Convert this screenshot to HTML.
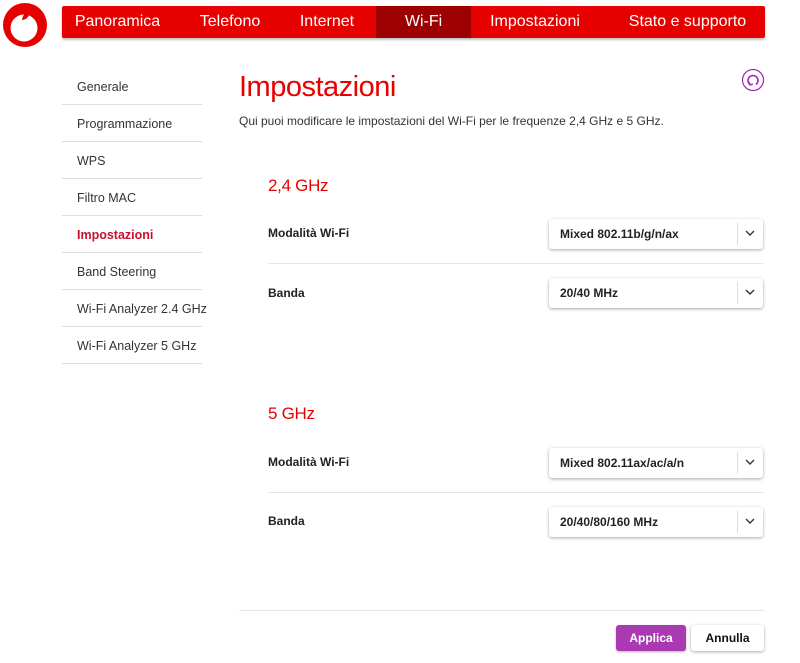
<!DOCTYPE html>
<html><head><meta charset="utf-8"><style>
*{margin:0;padding:0;box-sizing:border-box}
body{width:800px;height:663px;background:#fff;font-family:"Liberation Sans",Arial,sans-serif;position:relative;overflow:hidden;color:#333}
.abs{position:absolute}
.nav{left:62px;top:6px;width:703px;height:32px;background:#e60000;border-radius:2px;box-shadow:0 2px 2px rgba(0,0,0,.25)}
.nav span{position:absolute;top:0;height:32px;line-height:32px;color:#fff;font-size:16px;text-align:center;white-space:nowrap}
.side{left:62px;width:140px;font-size:12.5px;color:#333}
.side div{height:37px;line-height:39px;padding-left:15px;border-bottom:1px solid #ddd;white-space:nowrap}
.lbl{left:268px;font-size:12px;font-weight:bold;color:#222}
.sel{left:549px;width:214px;height:30px;border-radius:3px;box-shadow:0 1px 3px rgba(0,0,0,.35);background:#fff;font-size:12px;font-weight:bold;color:#222;line-height:30px;padding-left:11px}
.sel i{position:absolute;right:25px;top:4px;width:1px;height:22px;background:#ddd}
.sel svg{position:absolute;right:8px;top:11px}
.hr{height:1px;background:#e6e6e6}
.h2{left:268px;font-size:17px;color:#e60000;letter-spacing:-0.3px}
</style></head><body>
<svg class="abs" style="left:2px;top:2px" width="46" height="46" viewBox="0 0 46 46"><circle cx="23" cy="23" r="22" fill="#e60000"/><circle cx="22" cy="26" r="13.5" fill="#fff"/><path d="M33 7C27 7 21 11 20 18C23 18 26 16 27 13C28 11 30 10 33 10Z" fill="#e60000"/></svg>
<div class="abs nav">
<span style="left:0;width:111px">Panoramica</span>
<span style="left:125px;width:86px">Telefono</span>
<span style="left:225px;width:80px">Internet</span>
<span style="left:314px;width:95px;background:#9c0000">Wi-Fi</span>
<span style="left:418px;width:110px">Impostazioni</span>
<span style="left:548px;width:155px">Stato e supporto</span>
</div>
<div class="abs side" style="top:68px">
<div>Generale</div><div>Programmazione</div><div>WPS</div><div>Filtro MAC</div>
<div style="color:#c8102e;font-weight:bold">Impostazioni</div><div>Band Steering</div><div>Wi-Fi Analyzer 2.4 GHz</div><div>Wi-Fi Analyzer 5 GHz</div>
</div>
<div class="abs" style="left:239px;top:71px;font-size:29px;color:#e60000;letter-spacing:-0.5px">Impostazioni</div>
<div class="abs" style="left:239px;top:114px;font-size:12px;color:#333">Qui puoi modificare le impostazioni del Wi-Fi per le frequenze 2,4 GHz e 5 GHz.</div>
<svg class="abs" style="left:741px;top:68px" width="24" height="24" viewBox="0 0 24 24"><circle cx="12" cy="12" r="10.5" fill="none" stroke="#9c27b0" stroke-width="1.2"/><path d="M9 16.5A5 5 0 1 1 15 16.5" fill="none" stroke="#9c27b0" stroke-width="1.6"/><path d="M8 14l1 3 3-1" fill="none" stroke="#9c27b0" stroke-width="1.4"/></svg>
<div class="abs h2" style="top:176px">2,4 GHz</div>
<div class="abs lbl" style="top:226px">Modalità Wi-Fi</div>
<div class="abs sel" style="top:219px">Mixed 802.11b/g/n/ax<i></i><svg width="10" height="7"><path d="M1 1l4 4 4-4" fill="none" stroke="#333" stroke-width="1.4"/></svg></div>
<div class="abs hr" style="left:268px;top:263px;width:495px"></div>
<div class="abs lbl" style="top:286px">Banda</div>
<div class="abs sel" style="top:278px">20/40 MHz<i></i><svg width="10" height="7"><path d="M1 1l4 4 4-4" fill="none" stroke="#333" stroke-width="1.4"/></svg></div>
<div class="abs h2" style="top:404px">5 GHz</div>
<div class="abs lbl" style="top:455px">Modalità Wi-Fi</div>
<div class="abs sel" style="top:448px">Mixed 802.11ax/ac/a/n<i></i><svg width="10" height="7"><path d="M1 1l4 4 4-4" fill="none" stroke="#333" stroke-width="1.4"/></svg></div>
<div class="abs hr" style="left:268px;top:492px;width:495px"></div>
<div class="abs lbl" style="top:514px">Banda</div>
<div class="abs sel" style="top:507px">20/40/80/160 MHz<i></i><svg width="10" height="7"><path d="M1 1l4 4 4-4" fill="none" stroke="#333" stroke-width="1.4"/></svg></div>
<div class="abs hr" style="left:239px;top:610px;width:526px"></div>
<div class="abs" style="left:616px;top:625px;width:70px;height:26px;background:#a93ab2;border-radius:3px;color:#fff;font-size:12px;font-weight:bold;text-align:center;line-height:26px;box-shadow:0 1px 2px rgba(0,0,0,.3)">Applica</div>
<div class="abs" style="left:691px;top:625px;width:73px;height:26px;background:#fff;border-radius:3px;color:#111;font-size:12px;font-weight:bold;text-align:center;line-height:26px;box-shadow:0 1px 3px rgba(0,0,0,.35)">Annulla</div>
</body></html>
